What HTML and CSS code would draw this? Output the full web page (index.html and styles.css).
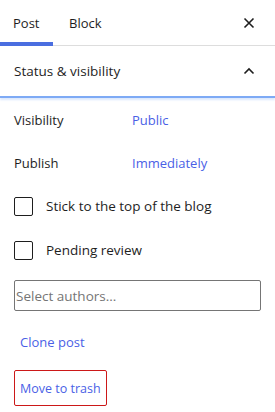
FILE: index.html
```html
<!DOCTYPE html>
<html>
<head>
<meta charset="utf-8">
<link rel="stylesheet" href="styles.css">
</head>
<body>
<div class="sidebar">
  <div class="tabs">
    <div class="tab active">Post</div>
    <div class="tab">Block</div>
    <button class="close" aria-label="Close">
      <svg width="12" height="12" viewBox="0 0 12 12"><path d="M1.5 1.5 L10.5 10.5 M10.5 1.5 L1.5 10.5" stroke="#1e1e1e" stroke-width="1.6" fill="none"/></svg>
    </button>
  </div>
  <div class="panel-header">
    <span class="panel-title">Status &amp; visibility</span>
    <svg class="chev" width="12" height="8" viewBox="0 0 12 8"><path d="M1.5 6.5 L6 2 L10.5 6.5" stroke="#1e1e1e" stroke-width="1.6" fill="none"/></svg>
  </div>
  <div class="panel-body">
    <div class="row"><span class="label">Visibility</span><a class="link">Public</a></div>
    <div class="row"><span class="label">Publish</span><a class="link">Immediately</a></div>
    <label class="check"><span class="box"></span><span>Stick to the top of the blog</span></label>
    <label class="check"><span class="box"></span><span>Pending review</span></label>
    <div class="input">Select authors...</div>
    <a class="link clone">Clone post</a>
    <div class="trash-wrap"><button class="trash">Move to trash</button></div>
  </div>
</div>
</body>
</html>
```
FILE: styles.css
```css
* { box-sizing: border-box; }
html, body { margin: 0; padding: 0; background: #fff; }
body {
  font-family: "Open Sans", "Noto Sans", sans-serif;
  font-size: 13px;
  color: #1e1e1e;
  width: 275px;
  height: 412px;
  overflow: hidden;
}
.tabs {
  display: flex;
  align-items: stretch;
  height: 46px;
  border-bottom: 1px solid #dddddd;
}
.tab {
  display: flex;
  align-items: center;
  padding: 0 14px 0 13px;
  font-weight: 500;
  color: #1e1e1e;
  border-bottom: 4px solid transparent;
  margin-bottom: -1px;
  padding-top: 3px;
  width: 53px;
}
.tab + .tab { padding-left: 16px; width: auto; }
.tab.active { border-bottom-color: #4a6ee0; }
.close {
  margin-left: auto;
  margin-right: 20px;
  background: none;
  border: 0;
  padding: 0;
  display: flex;
  align-items: center;
}
.panel-header {
  height: 52px;
  display: flex;
  align-items: center;
  justify-content: space-between;
  padding: 0 20px 0 14px;
  border-bottom: 2px solid #7eaaf5;
  box-shadow: 0 2px 2px #dbe8fd;
  font-weight: 500;
  font-size: 13.5px;
}
.panel-body {
  padding: 0 14px 0 14px;
  display: flex;
  flex-direction: column;
}
.row {
  display: flex;
  align-items: center;
  height: 43px;
}
.label { width: 118px; }
.link { color: #4a5fe6; text-decoration: none; }
.check {
  display: flex;
  align-items: center;
  gap: 13px;
  height: 44px;
  font-size: 13.5px;
}
.box {
  width: 19px;
  height: 19px;
  border: 1.5px solid #1e1e1e;
  border-radius: 2px;
}
.input {
  margin-top: 8px;
  height: 31px;
  border: 1.5px solid #757575;
  border-radius: 2px;
  color: #757575;
  display: flex;
  align-items: center;
  padding-left: 1px;
  font-size: 13.5px;
}
.clone {
  padding: 0 6px;
  height: 31px;
  margin-top: 15px;
  display: flex;
  align-items: center;
}
.trash-wrap { display: flex; margin-top: 13px; }
.trash {
  height: 36px;
  font-family: inherit;
  font-size: 12.5px;
  color: #4a5fe6;
  background: #fff;
  border: 1.5px solid #cc1818;
  border-radius: 2px;
  padding: 0 5px;
}
```
